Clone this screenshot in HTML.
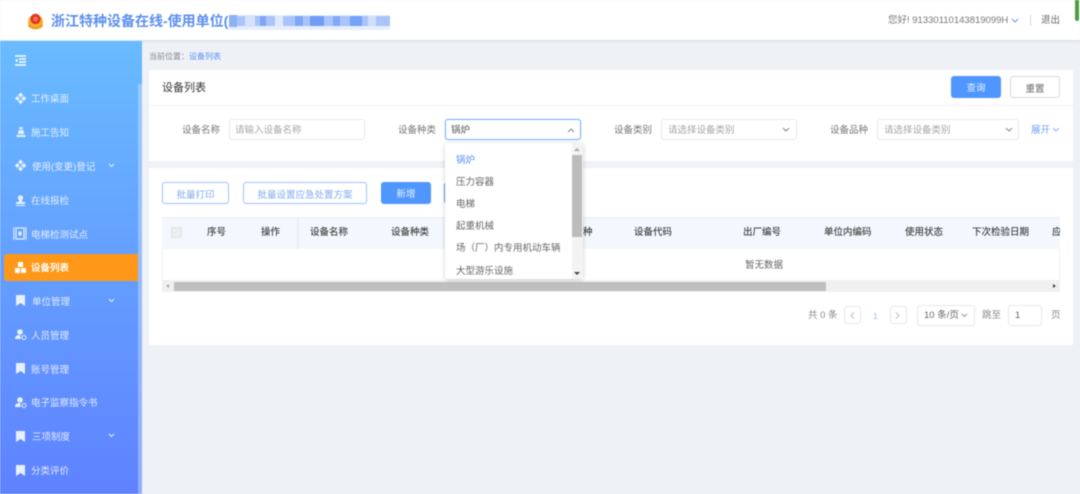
<!DOCTYPE html>
<html lang="zh"><head><meta charset="utf-8"><title>设备列表</title>
<style>
*{box-sizing:border-box}
html,body{margin:0;padding:0;width:1080px;height:494px;overflow:hidden;background:#eef1f6}
body{font-family:"Liberation Sans","Noto Sans CJK SC",sans-serif;font-size:9.5px;color:#666;position:relative}
#w{position:absolute;left:0;top:0;width:1080px;height:494px;filter:blur(.4px);overflow:hidden}
.a,.t{position:absolute}
.t{white-space:nowrap;line-height:16px}
.box{position:absolute;background:#fff}
.inp{position:absolute;background:#fff;border:1px solid #e6e8ec;border-radius:3px;height:21px}
.s{color:rgba(255,255,255,.82);font-size:9.5px;margin-top:1px}
.h{color:#444;font-weight:500;font-size:9.5px}
.l{color:#777}
.p{color:#a6a6a6}
.o{color:#666;font-size:9.5px}
.btn{position:absolute;border-radius:3px;text-align:center;font-size:9.5px;line-height:26px;height:22px}
.bo{border:1px solid #9cc3ff;background:#fff;color:#7fa9ee}
.bf{background:#4f97ff;color:#e8f1ff}
svg{position:absolute;overflow:visible}
.m{position:absolute;top:16px;height:5px}
</style></head><body><div id="w">

<!-- header -->
<div class="box" style="left:0;top:0;width:1080px;height:40px;box-shadow:0 1px 2px rgba(150,170,200,.35)"></div>
<svg style="left:27px;top:12px" width="18" height="18" viewBox="0 0 18 18"><circle cx="8.5" cy="10" r="7.5" fill="#f6b22f"/><path d="M2 11c2 5 11 5 13 0l1 3c-3 4-12 4-15 0z" fill="#f29a1a"/><circle cx="8.5" cy="7" r="5.2" fill="#e2361f"/><circle cx="8.5" cy="7" r="2.4" fill="#f2705a"/></svg>
<div class="t" style="left:51px;top:12px;font-size:14px;line-height:19px;font-weight:700;color:#5b8ff0">浙江特种设备在线-使用单位(</div>
<div class="a" style="left:229px;top:15px;width:161px;height:15px;background:#e6eefd"></div>
<div class="a" style="left:229px;top:16px;width:161px;height:10px;background:#a9c4f8"></div>
<div class="m" style="left:229px;width:8px;top:15px;height:12px;background:#8eb0f5"></div>
<div class="m" style="left:245px;width:10px;top:15px;height:12px;background:#d6e2fb"></div>
<div class="m" style="left:260px;width:6px;top:16px;height:10px;background:#7ea6f4"></div>
<div class="m" style="left:275px;width:8px;top:16px;height:10px;background:#e0e9fc"></div>
<div class="m" style="left:295px;width:8px;top:16px;height:10px;background:#7fa6f6"></div>
<div class="m" style="left:310px;width:14px;top:16px;height:10px;background:#6f9cf7"></div>
<div class="m" style="left:333px;width:7px;top:16px;height:10px;background:#80a8f6"></div>
<div class="m" style="left:350px;width:12px;top:16px;height:10px;background:#76a1f8"></div>
<div class="m" style="left:368px;width:8px;top:16px;height:10px;background:#d0def9"></div>

<div class="t" style="left:888px;top:13px;color:#777;font-size:9.5px">您好! 91330110143819099H</div>
<svg style="left:1011px;top:18px" width="8" height="5" viewBox="0 0 8 5"><path d="M1 1l3 3 3-3" fill="none" stroke="#6a94ee" stroke-width="1"/></svg>
<div class="a" style="left:1030px;top:15px;width:1px;height:11px;background:#d5d8dd"></div>
<div class="t" style="left:1041px;top:13px;color:#666">退出</div>
<div class="a" style="left:1075px;top:0;width:4px;height:21px;background:#4f9a45;border-radius:0 0 2px 2px"></div>

<!-- sidebar -->
<div class="a" style="left:0;top:41px;width:142px;height:453px;background:linear-gradient(#69bbff,#5f82ff)"></div>
<div class="a" style="left:138px;top:84px;width:4px;height:410px;background:rgba(225,235,255,.4)"></div>
<svg style="left:15px;top:55px" width="12" height="11" viewBox="0 0 12 11"><path d="M0 1h11M4 4h7M4 7h7M0 10h11" stroke="#fff" stroke-width="1.4"/><path d="M0 5.5l2.5-2v4z" fill="#fff"/></svg>

<svg style="left:15px;top:93px" width="11" height="11" viewBox="0 0 11 11" fill="#e6f0ff"><rect x="3.8" y=".3" width="3.6" height="3.6" transform="rotate(45 5.6 2.1)"/><rect x="3.8" y="7" width="3.6" height="3.6" transform="rotate(45 5.6 8.8)"/><rect x=".5" y="3.7" width="3.6" height="3.6" transform="rotate(45 2.3 5.5)"/><rect x="7" y="3.7" width="3.6" height="3.6" transform="rotate(45 8.8 5.5)"/></svg>
<div class="t s" style="left:31px;top:91px">工作桌面</div>

<svg style="left:16px;top:127px" width="10" height="11" viewBox="0 0 10 11" fill="#e6f0ff"><path d="M3.5 0h3l.5 2H3zM2.8 3h4.4l1 4H1.8zM.5 8h9v2h-9z"/></svg>
<div class="t s" style="left:31px;top:125px">施工告知</div>

<svg style="left:15px;top:160px" width="11" height="11" viewBox="0 0 11 11" fill="#e6f0ff"><rect x="3.8" y=".3" width="3.6" height="3.6" transform="rotate(45 5.6 2.1)"/><rect x="3.8" y="7" width="3.6" height="3.6" transform="rotate(45 5.6 8.8)"/><rect x=".5" y="3.7" width="3.6" height="3.6" transform="rotate(45 2.3 5.5)"/><rect x="7" y="3.7" width="3.6" height="3.6" transform="rotate(45 8.8 5.5)"/></svg>
<div class="t s" style="left:32px;top:159px">使用(变更)登记</div>
<svg style="left:108px;top:163px" width="7" height="5" viewBox="0 0 7 5"><path d="M1 1l2.5 2.5L6 1" fill="none" stroke="#e6f0ff" stroke-width="1"/></svg>

<svg style="left:15px;top:195px" width="11" height="11" viewBox="0 0 11 11" fill="#e6f0ff"><circle cx="5.5" cy="2.8" r="2.6"/><path d="M4 5h3v2h3v2H1V7h3zM1 10h9v1H1z"/></svg>
<div class="t s" style="left:31px;top:193px">在线报检</div>

<svg style="left:13px;top:226px" width="14" height="15" viewBox="0 0 14 15" fill="none" stroke="#e6f0ff"><path d="M.8 1v13M13 1v13" stroke-width="1"/><rect x="3" y="2" width="8" height="11" stroke-width="1.2"/><rect x="5.5" y="5.5" width="3" height="4" fill="#e6f0ff" stroke="none"/></svg>
<div class="t s" style="left:31px;top:227px">电梯检测试点</div>

<div class="a" style="left:4px;top:254px;width:134px;height:27px;background:#ff9819;border-radius:3px 0 0 3px"></div>
<svg style="left:15px;top:262px" width="11" height="11" viewBox="0 0 11 11" fill="#fff"><rect x="3" y="0" width="5" height="5"/><rect x="0" y="6" width="5" height="5"/><rect x="6" y="6" width="5" height="5"/></svg>
<div class="t" style="left:31px;top:261px;color:#fff;font-weight:700;font-size:9.5px">设备列表</div>

<svg style="left:16px;top:295px" width="9" height="11" viewBox="0 0 9 11"><path d="M0 0h9v11L4.500 8 0 11z" fill="#e6f0ff"/></svg>
<div class="t s" style="left:32px;top:294px">单位管理</div>
<svg style="left:108px;top:298px" width="7" height="5" viewBox="0 0 7 5"><path d="M1 1l2.5 2.5L6 1" fill="none" stroke="#e6f0ff" stroke-width="1"/></svg>

<svg style="left:15px;top:329px" width="12" height="11" viewBox="0 0 12 11" fill="#e6f0ff"><circle cx="5" cy="3" r="2.800"/><path d="M0 10c0-3 2-4 5-4l1 4z"/><circle cx="9" cy="8.500" r="2" fill="none" stroke="#e6f0ff"/></svg>
<div class="t s" style="left:31px;top:328px">人员管理</div>

<svg style="left:16px;top:363px" width="9" height="11" viewBox="0 0 9 11"><path d="M0 0h9v11L4.500 8 0 11z" fill="#e6f0ff"/></svg>
<div class="t s" style="left:31px;top:362px">账号管理</div>

<svg style="left:15px;top:397px" width="12" height="11" viewBox="0 0 12 11" fill="#e6f0ff"><circle cx="5" cy="3" r="2.800"/><path d="M0 10c0-3 2-4 5-4l1 4z"/><circle cx="9" cy="8.500" r="2" fill="none" stroke="#e6f0ff"/></svg>
<div class="t s" style="left:31px;top:395px">电子监察指令书</div>

<svg style="left:16px;top:431px" width="9" height="11" viewBox="0 0 9 11"><path d="M0 0h9v11L4.500 8 0 11z" fill="#e6f0ff"/></svg>
<div class="t s" style="left:32px;top:429px">三项制度</div>
<svg style="left:108px;top:433px" width="7" height="5" viewBox="0 0 7 5"><path d="M1 1l2.5 2.5L6 1" fill="none" stroke="#e6f0ff" stroke-width="1"/></svg>

<svg style="left:16px;top:465px" width="9" height="11" viewBox="0 0 9 11"><path d="M0 0h9v11L4.500 8 0 11z" fill="#e6f0ff"/></svg>
<div class="t s" style="left:31px;top:463px">分类评价</div>

<!-- breadcrumb -->
<div class="t" style="left:149px;top:49px;font-size:8px;color:#888">当前位置：<span style="color:#5b8ff0">设备列表</span></div>

<!-- title card -->
<div class="box" style="left:149px;top:70px;width:924px;height:35px"></div>
<div class="t" style="left:162px;top:80px;font-size:11px;color:#333">设备列表</div>
<div class="btn bf" style="left:951px;top:76px;width:50px;height:22px">查询</div>
<div class="btn" style="left:1010px;top:76px;width:50px;height:22px;border:1px solid #d5d7db;background:#fff;color:#666">重置</div>

<!-- filter card -->
<div class="box" style="left:149px;top:106px;width:924px;height:55px"></div>
<div class="t l" style="left:182px;top:123px">设备名称</div>
<div class="inp" style="left:229px;top:119px;width:136px"></div>
<div class="t p" style="left:235px;top:123px">请输入设备名称</div>

<div class="t l" style="left:398px;top:123px">设备种类</div>
<div class="inp" style="left:445px;top:119px;width:136px;border-color:#7db1ff;box-shadow:0 0 1px #9cc3ff"></div>
<div class="t" style="left:451px;top:123px;color:#555">锅炉</div>
<svg style="left:567px;top:128px" width="8" height="5" viewBox="0 0 8 5"><path d="M1 4l3-3 3 3" fill="none" stroke="#888" stroke-width="1"/></svg>

<div class="t l" style="left:614px;top:123px">设备类别</div>
<div class="inp" style="left:661px;top:119px;width:136px"></div>
<div class="t p" style="left:668px;top:123px">请选择设备类别</div>
<svg style="left:782px;top:127px" width="8" height="5" viewBox="0 0 8 5"><path d="M1 1l3 3 3-3" fill="none" stroke="#888" stroke-width="1"/></svg>

<div class="t l" style="left:830px;top:123px">设备品种</div>
<div class="inp" style="left:877px;top:119px;width:142px"></div>
<div class="t p" style="left:884px;top:123px">请选择设备类别</div>
<svg style="left:1005px;top:127px" width="8" height="5" viewBox="0 0 8 5"><path d="M1 1l3 3 3-3" fill="none" stroke="#888" stroke-width="1"/></svg>
<div class="t" style="left:1031px;top:123px;color:#6f9ff5">展开</div>
<svg style="left:1052px;top:127px" width="8" height="5" viewBox="0 0 8 5"><path d="M1 1l3 3 3-3" fill="none" stroke="#8fb5f5" stroke-width="1"/></svg>

<!-- table card -->
<div class="box" style="left:149px;top:168px;width:924px;height:177px"></div>
<div class="btn bo" style="left:162px;top:182px;width:67px">批量打印</div>
<div class="btn bo" style="left:243px;top:182px;width:124px">批量设置应急处置方案</div>
<div class="btn bf" style="left:381px;top:182px;width:50px">新增</div>
<div class="btn bf" style="left:444px;top:182px;width:20px"></div>

<div class="a" style="left:162px;top:217px;width:898px;height:32px;background:#f3f8fe;border-top:1px solid #e8eef6"></div>
<div class="a" style="left:162px;top:249px;width:898px;height:43px;background:#fff;border-left:1px solid #eef0f3;border-right:1px solid #eef0f3"></div>
<div class="a" style="left:297px;top:217px;width:2px;height:32px;background:#e8edf4"></div>
<div class="a" style="left:171px;top:227px;width:11px;height:11px;background:#eceef0;border:1px solid #e0e2e5;border-radius:2px"></div>
<div class="t h" style="left:207px;top:225px">序号</div>
<div class="t h" style="left:261px;top:225px">操作</div>
<div class="t h" style="left:310px;top:225px">设备名称</div>
<div class="t h" style="left:391px;top:225px">设备种类</div>
<div class="t h" style="left:583px;top:225px">种</div>
<div class="t h" style="left:634px;top:225px">设备代码</div>
<div class="t h" style="left:743px;top:225px">出厂编号</div>
<div class="t h" style="left:824px;top:225px">单位内编码</div>
<div class="t h" style="left:905px;top:225px">使用状态</div>
<div class="t h" style="left:972px;top:225px">下次检验日期</div>
<div class="a" style="left:1052px;top:225px;width:8px;height:16px;overflow:hidden"><span class="t h" style="left:0;top:0">应</span></div>
<div class="t" style="left:745px;top:258px;color:#666">暂无数据</div>

<!-- h scrollbar -->
<div class="a" style="left:162px;top:280px;width:898px;height:12px;background:#f0f0f0"></div>
<div class="a" style="left:174px;top:282px;width:652px;height:9px;background:#bfbfbf"></div>
<div class="a" style="left:166px;top:284px;width:0;height:0;border:2.5px solid transparent;border-right:3px solid #aaa;border-left:0"></div>
<div class="a" style="left:1053px;top:284px;width:0;height:0;border:2.500px solid transparent;border-left:3px solid #444;border-right:0"></div>

<!-- pagination -->
<div class="t" style="left:808px;top:308px;color:#888">共 0 条</div>
<div class="inp" style="left:844px;top:306px;width:17px;height:18px"></div>
<svg style="left:850px;top:312px" width="5" height="7" viewBox="0 0 5 7"><path d="M4 .5l-3 3 3 3" fill="none" stroke="#bbb"/></svg>
<div class="t" style="left:873px;top:308px;color:#9ab6f2;font-size:8.5px">1</div>
<div class="inp" style="left:890px;top:306px;width:17px;height:18px"></div>
<svg style="left:895px;top:312px" width="5" height="7" viewBox="0 0 5 7"><path d="M1 .5l3 3-3 3" fill="none" stroke="#bbb"/></svg>
<div class="inp" style="left:917px;top:305px;width:58px;height:21px"></div>
<div class="t" style="left:924px;top:308px;color:#666">10 条/页</div>
<svg style="left:961px;top:313px" width="7" height="5" viewBox="0 0 7 5"><path d="M1 1l2.500 2.500L6 1" fill="none" stroke="#999"/></svg>
<div class="t" style="left:982px;top:308px;color:#888">跳至</div>
<div class="inp" style="left:1008px;top:305px;width:34px;height:21px"></div>
<div class="t" style="left:1015px;top:308px;color:#666">1</div>
<div class="t" style="left:1051px;top:308px;color:#888">页</div>

<!-- dropdown -->
<div class="box" style="left:445px;top:143px;width:138px;height:136px;border-radius:3px;box-shadow:0 1px 5px rgba(0,0,0,.2)"></div>
<div class="a" style="left:572px;top:143px;width:11px;height:136px;background:#f3f3f3"></div>
<div class="a" style="left:572px;top:155px;width:10px;height:82px;background:#bcbcbc"></div>
<div class="a" style="left:574px;top:148px;width:0;height:0;border-left:3px solid transparent;border-right:3px solid transparent;border-bottom:3px solid #aaa"></div>
<div class="a" style="left:574px;top:272px;width:0;height:0;border-left:3px solid transparent;border-right:3px solid transparent;border-top:3px solid #444"></div>
<div class="t" style="left:456px;top:153px;color:#5b8ff0">锅炉</div>
<div class="t o" style="left:456px;top:175px">压力容器</div>
<div class="t o" style="left:456px;top:197px">电梯</div>
<div class="t o" style="left:456px;top:219px">起重机械</div>
<div class="t o" style="left:456px;top:241px">场（厂）内专用机动车辆</div>
<div class="t o" style="left:456px;top:264px">大型游乐设施</div>

</div></body></html>
